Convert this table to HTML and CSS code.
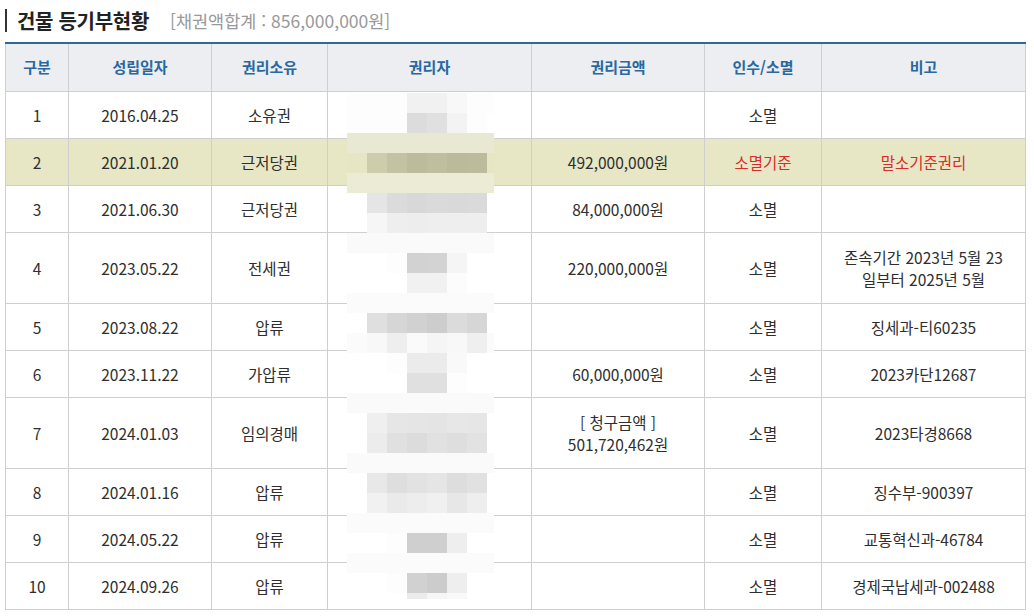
FILE: index.html
```html
<!DOCTYPE html>
<html lang="ko">
<head>
<meta charset="utf-8">
<title>건물 등기부현황</title>
<link rel="stylesheet" href="styles.css">
</head>
<body>
<div class="wrap">
  <h2 class="title"><span class="title-main">건물 등기부현황</span><span class="title-sub">[채권액합계 : 856,000,000원]</span></h2>
  <div class="table-box">
    <table class="reg">
      <colgroup>
        <col class="c-no"><col class="c-date"><col class="c-kind"><col class="c-owner"><col class="c-amt"><col class="c-take"><col class="c-note">
      </colgroup>
      <thead>
        <tr><th>구분</th><th>성립일자</th><th>권리소유</th><th>권리자</th><th>권리금액</th><th>인수/소멸</th><th>비고</th></tr>
      </thead>
      <tbody>
        <tr><td>1</td><td>2016.04.25</td><td>소유권</td><td></td><td></td><td>소멸</td><td></td></tr>
        <tr class="hl"><td>2</td><td>2021.01.20</td><td>근저당권</td><td></td><td>492,000,000원</td><td class="red">소멸기준</td><td class="red">말소기준권리</td></tr>
        <tr><td>3</td><td>2021.06.30</td><td>근저당권</td><td></td><td>84,000,000원</td><td>소멸</td><td></td></tr>
        <tr class="tall"><td>4</td><td>2023.05.22</td><td>전세권</td><td></td><td>220,000,000원</td><td>소멸</td><td>존속기간 2023년 5월 23 일부터 2025년 5월</td></tr>
        <tr><td>5</td><td>2023.08.22</td><td>압류</td><td></td><td></td><td>소멸</td><td>징세과-티60235</td></tr>
        <tr><td>6</td><td>2023.11.22</td><td>가압류</td><td></td><td>60,000,000원</td><td>소멸</td><td>2023카단12687</td></tr>
        <tr class="tall"><td>7</td><td>2024.01.03</td><td>임의경매</td><td></td><td>[ 청구금액 ]<br>501,720,462원</td><td>소멸</td><td>2023타경8668</td></tr>
        <tr><td>8</td><td>2024.01.16</td><td>압류</td><td></td><td></td><td>소멸</td><td>징수부-900397</td></tr>
        <tr><td>9</td><td>2024.05.22</td><td>압류</td><td></td><td></td><td>소멸</td><td>교통혁신과-46784</td></tr>
        <tr><td>10</td><td>2024.09.26</td><td>압류</td><td></td><td></td><td>소멸</td><td>경제국납세과-002488</td></tr>
      </tbody>
    </table>
    <div class="mosaic" id="mosaic" aria-hidden="true"></div>
  </div>
</div>
<script src="script.js"></script>
</body>
</html>
```
FILE: styles.css
```css
* { box-sizing: border-box; }
html, body { margin: 0; padding: 0; background: #fff; }
body {
  font-family: "Noto Sans CJK KR", "Noto Sans", sans-serif;
  color: #333;
  width: 1034px;
  height: 616px;
  overflow: hidden;
}
.wrap { padding: 0 9px 0 5px; }
.title {
  margin: 0;
  height: 42px;
  display: flex;
  align-items: center;
  padding-bottom: 2px;
}
.title-main {
  display: flex;
  align-items: center;
  font-size: 20px;
  font-weight: 700;
  color: #222;
  line-height: 23px;
  border-left: 2px solid #333;
  padding-left: 10px;
  letter-spacing: -0.3px;
}
.title-sub {
  font-size: 17.5px;
  font-weight: 400;
  color: #999;
  margin-left: 21px;
}
.table-box { position: relative; }
.reg {
  width: 1020px;
  border-collapse: collapse;
  table-layout: fixed;
  border-top: 2px solid #2d6b93;
  font-size: 15.5px;
}
.c-no { width: 63px; }
.c-date { width: 143px; }
.c-kind { width: 116px; }
.c-owner { width: 204px; }
.c-amt { width: 173px; }
.c-take { width: 117px; }
.c-note { width: 204px; }
.reg th, .reg td {
  border: 1px solid #cfcfcf;
  text-align: center;
  vertical-align: middle;
  padding: 0 14px;
  height: 47px;
  line-height: 22px;
}
.reg th {
  background: #eceef1;
  color: #2968a0;
  font-weight: 700;
  font-size: 15px;
  height: 48px;
}
.reg td { color: #2e2e2e; }
.reg tr.tall td { height: 71px; }
.reg tr.hl td { background: #e7e7c5; }
.reg td.red { color: #d92b2b; }
.mosaic {
  position: absolute;
  left: 342px;
  top: 51px;
  width: 147px;
  height: 506px;
  overflow: hidden;
  display: grid;
  grid-template-columns: repeat(7, 20px) 7px;
  grid-auto-rows: 20px;
}
.mosaic .px { width: 100%; height: 100%; }
```
FILE: script.js
```js
(function () {
  var T = 'transparent';
  function halo(c) { return [c, c, c, c, c, c, c, c]; }
  var rows = [
    ['#fdfdfd', '#fdfdfd', '#fdfdfd', '#f1f1f1', '#f1f1f1', '#f8f8f8', '#fdfdfd', '#fdfdfd'],
    ['#fdfdfd', '#fdfdfd', '#fdfdfd', '#dcdcdc', '#e0e0e0', '#f3f3f3', '#fdfdfd', T],
    halo('#e9e9d3'),
    ['#e6e6c5', '#cdcdac', '#c3c3a3', '#bcbc9c', '#bfbf9f', '#bbbb9b', '#bcbc9c', '#e6e6c5'],
    halo('#ebebd6'),
    [T, '#e5e5e5', '#dbdbdb', '#d8d8d8', '#dadada', '#d9d9d9', '#dadada', T],
    [T, '#f6f6f6', '#eeeeee', '#ededed', '#eeeeee', '#eeeeee', '#eeeeee', T],
    halo('#fafafa'),
    [T, T, '#fdfdfd', '#d2d2d2', '#d3d3d3', '#f5f5f5', T, T],
    [T, T, T, '#f1f1f1', '#f1f1f1', '#fcfcfc', T, T],
    halo('#fbfbfb'),
    [T, '#dfdfdf', '#d6d6d6', '#d1d1d1', '#cdcdcd', '#dbdbdb', '#d6d6d6', T],
    ['#fbfbfb', '#f8f8f8', '#eeeeee', '#fafafa', '#f5f5f5', '#f8f8f8', '#efefef', '#fbfbfb'],
    [T, T, '#fdfdfd', '#ebebeb', '#ebebeb', '#f9f9f9', T, T],
    [T, T, T, '#e0e0e0', '#e0e0e0', '#fdfdfd', T, T],
    halo('#fafafa'),
    [T, '#efefef', '#e6e6e6', '#e5e5e5', '#e4e4e4', '#e7e7e7', '#e6e6e6', T],
    [T, '#ececec', '#e0e0e0', '#dcdcdc', '#e1e1e1', '#dedede', '#e2e2e2', T],
    halo('#fafafa'),
    [T, '#e8e8e8', '#dedede', '#e2e2e2', '#e5e5e5', '#dddddd', '#e1e1e1', T],
    [T, '#f1f1f1', '#eaeaea', '#ededed', '#f0f0f0', '#e7e7e7', '#eeeeee', T],
    halo('#fbfbfb'),
    [T, T, '#fdfdfd', '#cfcfcf', '#cfcfcf', '#eeeeee', T, T],
    halo('#fbfbfb'),
    [T, T, '#fdfdfd', '#d1d1d1', '#cccccc', '#eeeeee', T, T],
    [T, T, T, '#ebebeb', '#f6f6f6', '#f9f9f9', T, T]
  ];
  var m = document.getElementById('mosaic');
  rows.forEach(function (r) {
    r.forEach(function (c) {
      var d = document.createElement('div');
      d.className = 'px';
      d.style.background = c;
      m.appendChild(d);
    });
  });
})();
```
